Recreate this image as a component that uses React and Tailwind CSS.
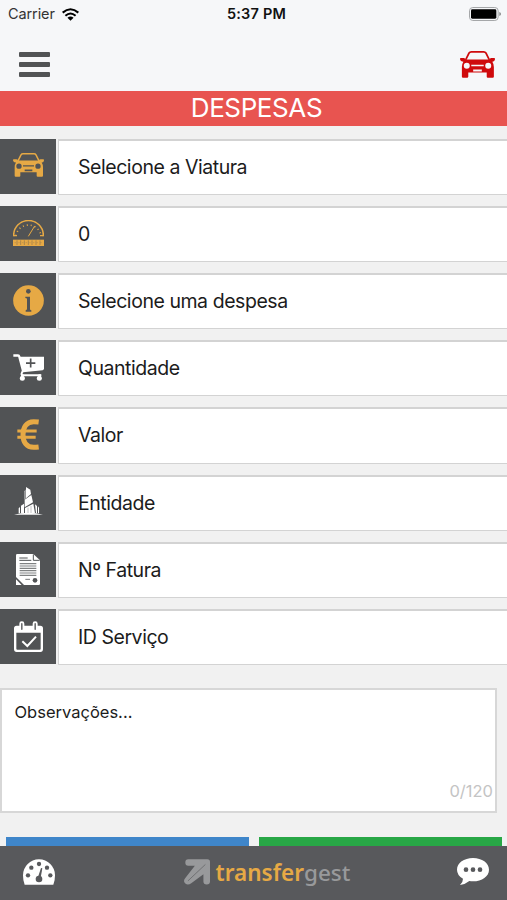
import React from 'react';

function CarIcon({ className }) {
  return (
    <svg className={className} viewBox="0 0 93 71" fill="currentColor">
      <path d="M15 23 24 5q2-3 6-3h33q4 0 6 3l9 18" fill="none" stroke="currentColor" strokeWidth="4.5" />
      <path
        fillRule="evenodd"
        d="M2 18h8q4 0 5 4h63q1-4 5-4h8q2 0 2 3t-3 6l-4 1q4 6 4 14v26q0 3-3 3H74q-3 0-3-3V57H22v11q0 3-3 3H8q-3 0-3-3V42q0-8 4-14l-5-1q-4-3-4-6t2-3ZM18 31a8 8 0 1 0 0 16 8 8 0 0 0 0-16Zm57 0a8 8 0 1 0 0 16 8 8 0 0 0 0-16ZM30 36v4h33v-4Zm5 13v5h23v-5Z"
      />
    </svg>
  );
}

function OdometerIcon({ className }) {
  return (
    <svg className={className} viewBox="0 0 93 78" fill="none" stroke="currentColor">
      <path d="M2 49v-3a44.500 44.500 0 0 1 89 0v3" strokeWidth="4.500" />
      <path d="M9 47A38 38 0 0 1 84 47" strokeWidth="5" strokeDasharray="3 9" />
      <path d="m46 49 19-31" strokeWidth="3" />
      <path d="M2 47h10M81 47h10" strokeWidth="4" />
      <path fill="currentColor" stroke="none" d="M0 59h93v19H0Z" />
      <path
        d="M12 61v14M23 61v14M34 61v14M46 61v14M57 61v14M69 61v14M81 61v14"
        stroke="#515355"
        strokeWidth="2"
        opacity=".6"
      />
      <path d="M5 68h83" stroke="#515355" strokeWidth="2" strokeDasharray="4 7" opacity=".35" />
    </svg>
  );
}

function InfoIcon({ className }) {
  return (
    <svg className={className} viewBox="0 0 93 93">
      <circle cx="46.5" cy="46.5" r="46" fill="currentColor" />
      <circle cx="46" cy="19" r="7" fill="#515355" />
      <path d="M37 35h14v37q0 4 4 4v4H38v-4q4-1 4-4V42q0-3-5-3Z" fill="#515355" />
    </svg>
  );
}

function CartIcon({ className }) {
  return (
    <svg className={className} viewBox="0 0 93 80">
      <path d="M1 4h14q3 0 4 4l12 45" fill="none" stroke="currentColor" strokeWidth="7" />
      <path d="M20 8h73v35q0 4-4 5l-59 6Z" fill="currentColor" />
      <path d="M30 50q-7 11-3 13h58" fill="none" stroke="currentColor" strokeWidth="6" />
      <path d="M28 60v12M80 60v12" stroke="currentColor" strokeWidth="7" />
      <circle cx="28" cy="72" r="7.500" fill="currentColor" />
      <circle cx="79" cy="72" r="7.500" fill="currentColor" />
      <path d="M53 13v27M39 27h28" stroke="#515355" strokeWidth="5" />
    </svg>
  );
}

function EuroIcon({ className }) {
  return (
    <svg className={className} viewBox="0 0 66 93" fill="none" stroke="currentColor">
      <path d="M65 9q-8-1-15-1C28 8 18 25 18 47s10 38 32 38q7 0 15-1" strokeWidth="15" />
      <path d="M1 36h58M1 55h55" strokeWidth="9" />
    </svg>
  );
}

function BuildingIcon({ className }) {
  return (
    <svg className={className} viewBox="0 0 87 84" fill="currentColor">
      <path d="M0 83q20-6 43-6t44 6Z" />
      <path d="m36 0 13 8 2 13-15 13Z" />
      <path d="m32 38 20-14 5 22-25 15ZM33 63l25-13 5 29H33Z" />
      <path d="m21 56 9-6v29h-9ZM18 60l-4 4v15h4ZM63 52l6 5v22h-3Zm9 6 3 4v17h-3Z" />
      <path d="m31 13 4-6v28l-4 3Z" opacity=".6" />
      <path d="M42 78V62M51 78V57" stroke="#515355" strokeWidth="2" opacity=".5" />
    </svg>
  );
}

function InvoiceIcon({ className }) {
  return (
    <svg className={className} viewBox="0 0 72 93">
      <path d="M4 0h48l20 19v70q0 4-4 4H24L0 69V4q0-4 4-4Z" fill="currentColor" />
      <path d="M52 1v18h19" fill="none" stroke="#515355" strokeWidth="3" />
      <path d="M0 76v17h17Z" fill="currentColor" />
      <path d="M10 12h25M10 19h36" stroke="#515355" strokeWidth="3" />
      <path d="M11 29h50M11 36h50M11 43h50M11 50h50M11 57h50M11 64h50" stroke="#808283" strokeWidth="3.500" />
      <path d="M28 76h14" stroke="#77797a" strokeWidth="3" />
      <circle cx="57" cy="79" r="7" fill="#515355" />
    </svg>
  );
}

function CalendarIcon({ className }) {
  return (
    <svg className={className} viewBox="0 0 87 93">
      <path
        fillRule="evenodd"
        fill="currentColor"
        d="M8 14h71q8 0 8 8v62q0 9-8 9H8q-8 0-8-9V22q0-8 8-8Zm-1 21v48q0 3 3 3h67q3 0 3-3V35Z"
      />
      <rect x="16" y="1" width="15" height="27" rx="7" fill="currentColor" />
      <rect x="56" y="1" width="15" height="27" rx="7" fill="currentColor" />
      <path d="M23.500 8v17M63.500 8v17" stroke="#515355" strokeWidth="4" strokeLinecap="round" />
      <path d="m25 61 15 14 26-28" fill="none" stroke="currentColor" strokeWidth="6" />
    </svg>
  );
}

function WifiIcon({ className }) {
  return (
    <svg className={className} viewBox="0 0 50 37" fill="none" stroke="currentColor" strokeWidth="6">
      <path d="M2 13q23-20 46 0M10 22q15-13 30 0" />
      <path d="m16 28 9 9 9-9q-9-7-18 0Z" fill="currentColor" stroke="none" />
    </svg>
  );
}

function BatteryIcon({ className }) {
  return (
    <svg className={className} viewBox="0 0 96 42">
      <rect x="1.5" y="1.5" width="86" height="39" rx="10" fill="none" stroke="#a5a7a9" strokeWidth="3" />
      <rect x="6" y="7" width="76" height="28" rx="4" fill="#000" />
      <path d="M91 15q5 2 5 6t-5 6Z" fill="#898b8c" />
    </svg>
  );
}

function DashboardIcon({ className }) {
  return (
    <svg className={className} viewBox="0 0 96 76">
      <path d="M5 76Q0 65 0 48a48 48 0 0 1 96 0q0 17-5 28Z" fill="currentColor" />
      <g fill="#58595c">
        <circle cx="15" cy="48" r="6.5" />
        <circle cx="25" cy="25" r="6.5" />
        <circle cx="48" cy="14" r="6.5" />
        <circle cx="72" cy="25" r="6.5" />
        <circle cx="82" cy="48" r="6.5" />
        <circle cx="48" cy="59" r="10" />
        <path d="m45 53 9-27 4 1-5 28Z" />
      </g>
    </svg>
  );
}

function ChatIcon({ className }) {
  return (
    <svg className={className} viewBox="0 0 96 81">
      <path
        d="M48 0c27 0 48 15 48 35S75 70 48 70q-6 0-11-1-12 10-28 12 9-8 9-19Q0 52 0 35C0 15 21 0 48 0Z"
        fill="currentColor"
      />
      <g fill="#58595c">
        <circle cx="27" cy="35" r="7" />
        <circle cx="48" cy="35" r="7" />
        <circle cx="69" cy="35" r="7" />
      </g>
    </svg>
  );
}

function LogoArrow({ className }) {
  return (
    <svg className={className} viewBox="0 0 79 78">
      <path
        d="M13 0h58q8 0 8 8v60q0 9-10 9t-10-9V46L22 73q-10 8-18 1t0-17l29-37H13q-9 0-9-10t9-10Z"
        fill="#98999b"
      />
      <path d="M12 66 65 16" stroke="#707173" strokeWidth="3" />
    </svg>
  );
}

const fields = [
  { label: 'Selecione a Viatura', icon: <CarIcon className="mb-0.5 h-6 w-[31px] text-[#e6a945]" /> },
  { label: '0', icon: <OdometerIcon className="h-[26px] w-[31px] text-[#e6a945]" /> },
  { label: 'Selecione uma despesa', icon: <InfoIcon className="size-[31px] text-[#e6a945]" /> },
  { label: 'Quantidade', icon: <CartIcon className="h-[27px] w-[31px] text-white" /> },
  { label: 'Valor', icon: <EuroIcon className="h-[31px] w-[22px] text-[#e6a945]" /> },
  { label: 'Entidade', icon: <BuildingIcon className="mb-0.5 h-7 w-[29px] text-white" /> },
  { label: 'Nº Fatura', icon: <InvoiceIcon className="h-[31px] w-6 text-white" /> },
  { label: 'ID Serviço', icon: <CalendarIcon className="h-[31px] w-[29px] text-white" /> },
];

function Field({ label, icon }) {
  return (
    <div className="flex h-[55.2px] gap-[1.5px]">
      <div className="flex w-14 shrink-0 items-center justify-center bg-[#515355]">{icon}</div>
      <div className="-mb-px flex flex-1 items-center border-t-2 border-b border-l border-[#d3d3d3] bg-white pl-[19.500px] text-[19.5px] tracking-[-0.45px] text-[#1c1c1c]">
        {label}
      </div>
    </div>
  );
}

export default function App() {
  return (
    <div className="flex h-[900px] w-[507px] flex-col overflow-hidden bg-[#f1f1f1] font-[Inter,sans-serif]">
      {/* Status bar */}
      <header className="h-[91px] shrink-0 bg-[#f6f7f9]">
        <div className="grid h-7 grid-cols-3 items-center pr-1.5 pl-2">
          <div className="flex items-center gap-[7px] text-[14.5px] tracking-[-0.1px] text-[#333]">
            Carrier
            <WifiIcon className="h-[13px] w-[17px] text-black" />
          </div>
          <span className="pl-1 text-center text-[14.5px] font-semibold tracking-[0.2px] text-[#111]">5:37 PM</span>
          <BatteryIcon className="h-3.5 w-8 justify-self-end" />
        </div>
        <div className="flex items-center justify-between pt-[22.500px] pr-3 pl-[19px]">
          <div className="flex flex-col gap-[5px] pt-px">
            <span className="h-[5px] w-[31px] rounded-[1px] bg-[#515355]" />
            <span className="h-[5px] w-[31px] rounded-[1px] bg-[#515355]" />
            <span className="h-[5px] w-[31px] rounded-[1px] bg-[#515355]" />
          </div>
          <CarIcon className="h-[27px] w-[35px] text-[#cf0a0c]" />
        </div>
      </header>

      <h1 className="flex h-[35px] shrink-0 items-center justify-center bg-[#e85450] pb-[3px] pl-1.5 text-[26px] tracking-[-0.4px] text-white">
        DESPESAS
      </h1>

      <main className="flex min-h-0 flex-1 flex-col overflow-hidden">
        <div className="flex flex-col gap-3 pt-[12.600px]">
          {fields.map((field) => (
            <Field key={field.label} {...field} />
          ))}
        </div>

        <div className="mt-[23.500px] flex h-[125px] w-[497px] shrink-0 flex-col justify-between border-2 border-[#d7d7d7] bg-white pt-2.5 pr-0.5 pb-[7px] pl-[12.500px]">
          <span className="text-[16.5px] text-[#1c1c1c]">Observações...</span>
          <span className="self-end text-[16.5px] text-[#c4c4c4]">0/120</span>
        </div>

        <div className="mt-6 flex shrink-0 gap-2.5 pr-[5px] pl-1.5">
          <div className="h-12 flex-1 bg-[#3f86ca]" />
          <div className="h-12 flex-1 bg-[#28a746]" />
        </div>
      </main>

      <footer className="flex h-[54px] shrink-0 items-center justify-between bg-[#58595c] pr-[18px] pb-[3px] pl-[23px]">
        <DashboardIcon className="h-[26px] w-8 text-white" />
        <div className="flex items-center gap-1.5 pl-[22px]">
          <LogoArrow className="mt-px size-[26px]" />
          <span className="pt-[3px] font-['Noto_Sans',sans-serif] text-[22.500px] leading-none font-semibold text-[#e6a945]">
            transfer<span className="font-medium text-[#98999b]">gest</span>
          </span>
        </div>
        <ChatIcon className="h-[27px] w-8 text-white" />
      </footer>
    </div>
  );
}
